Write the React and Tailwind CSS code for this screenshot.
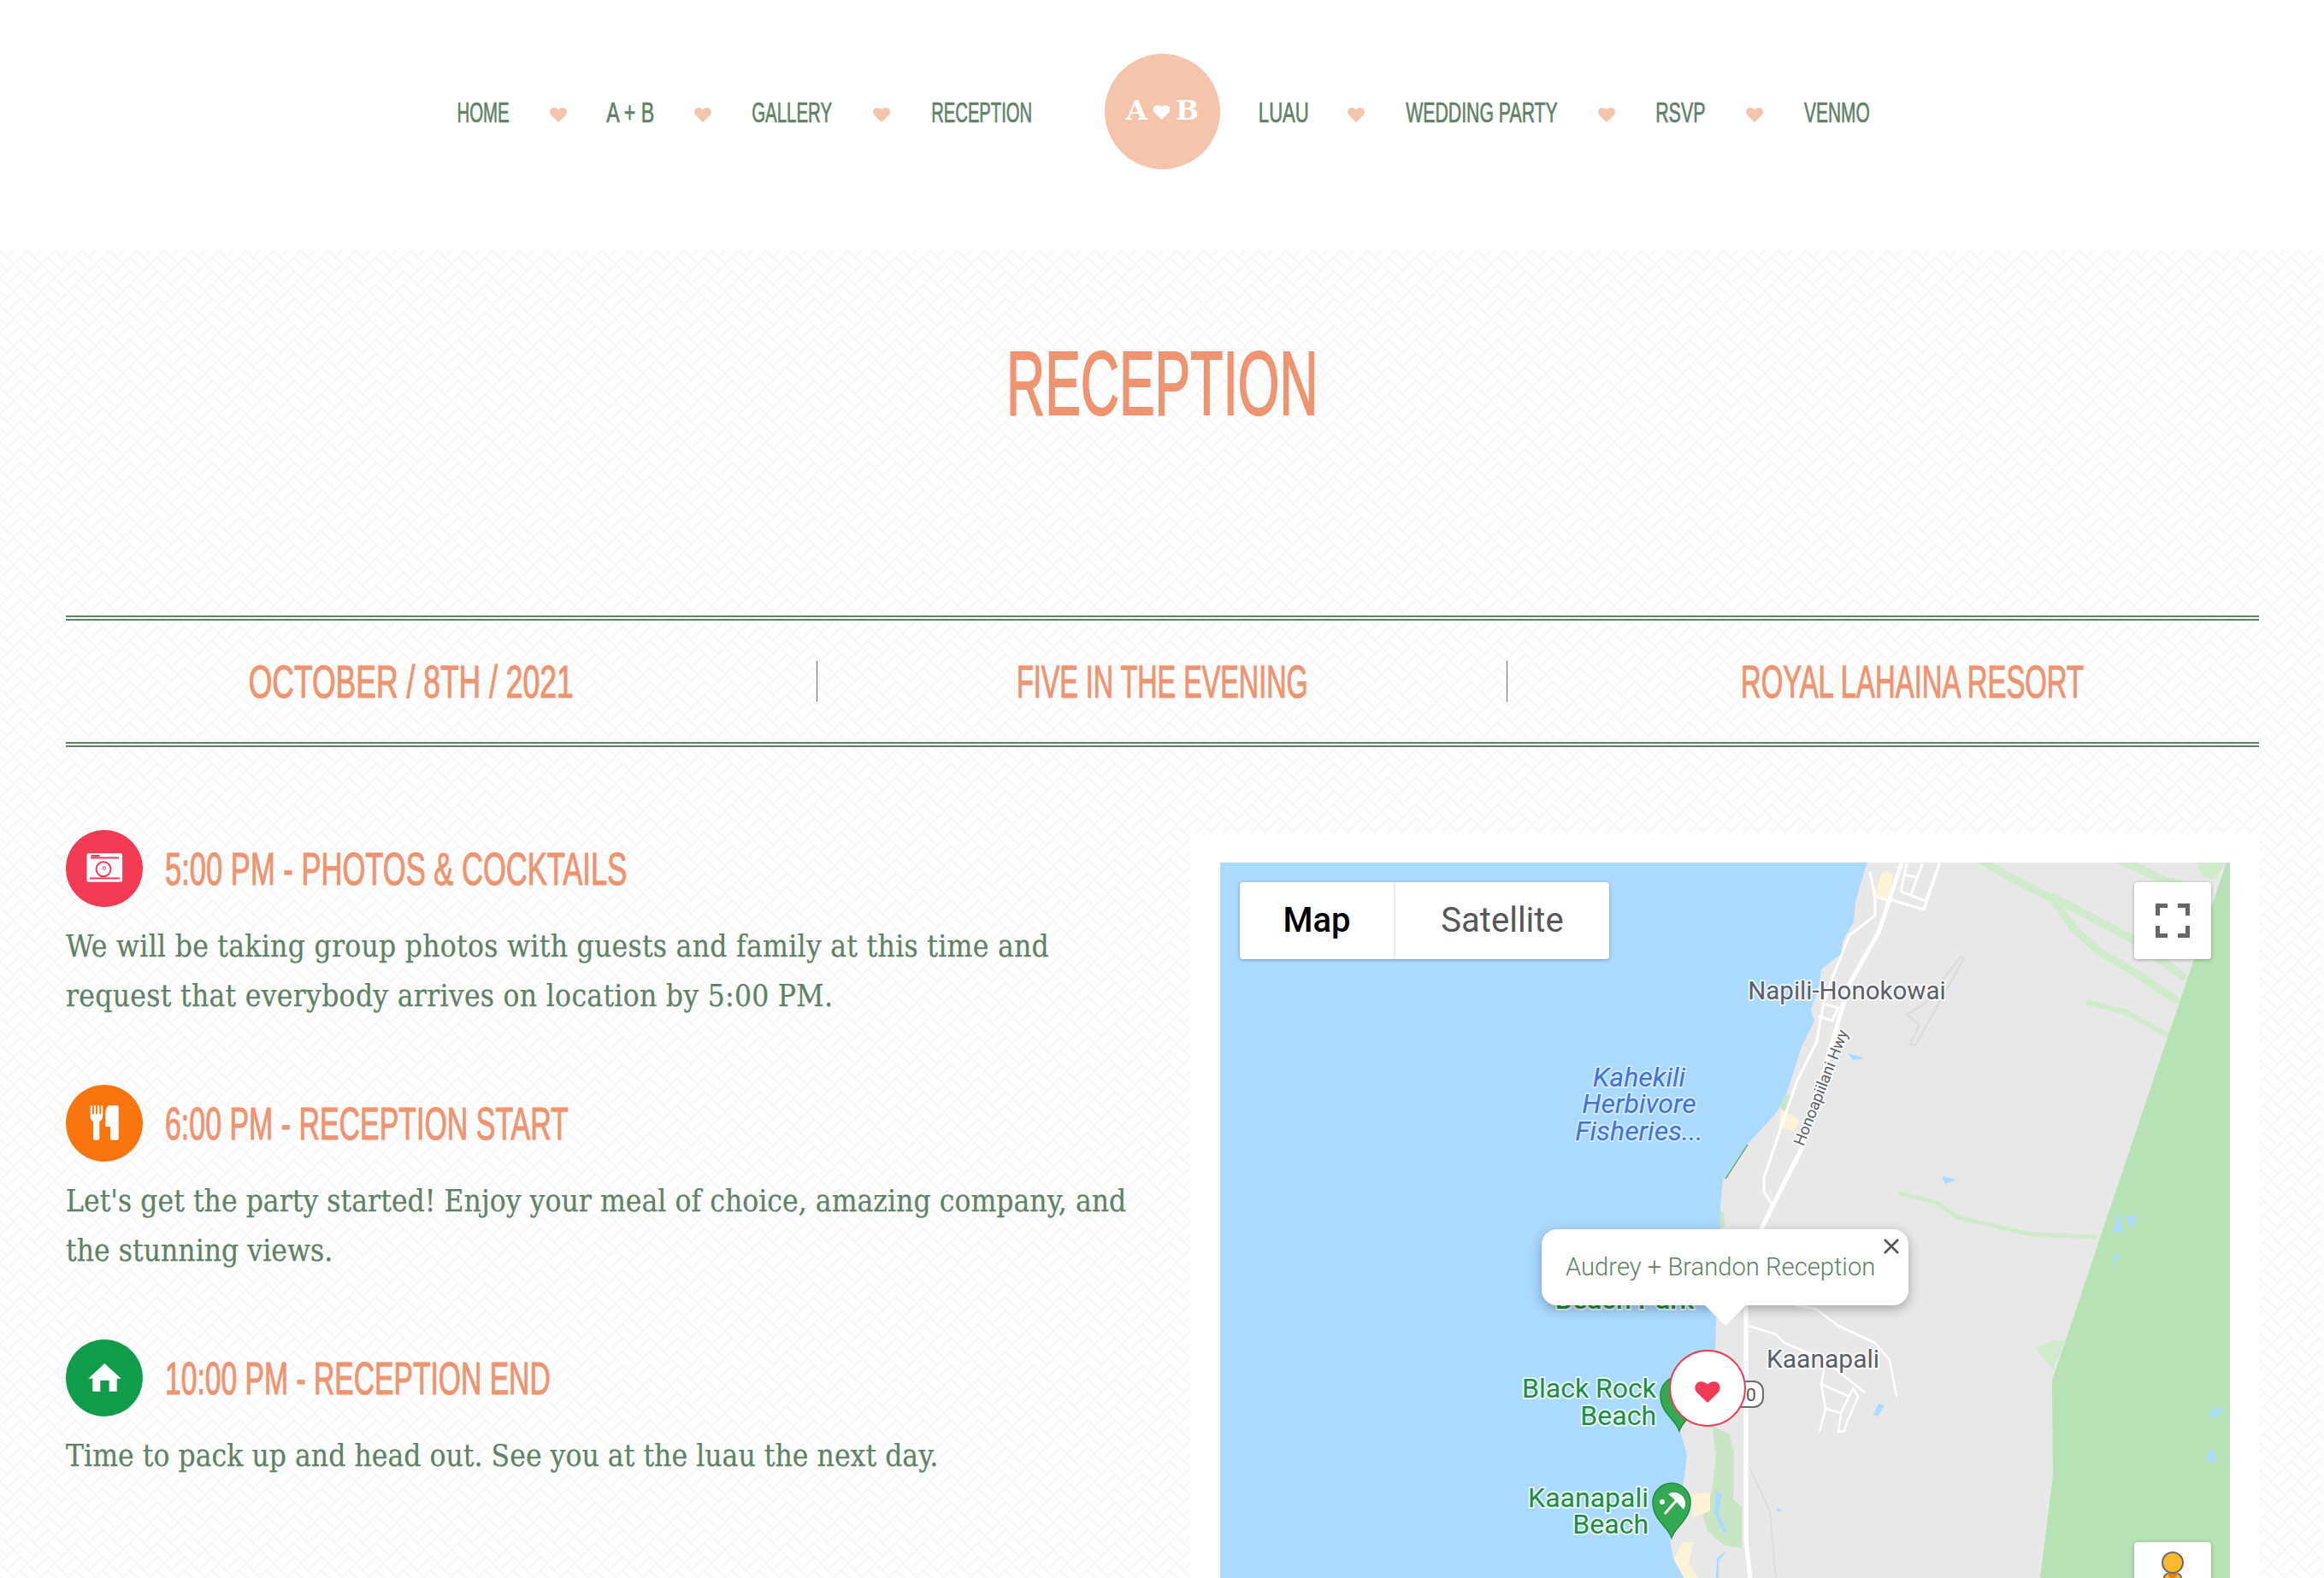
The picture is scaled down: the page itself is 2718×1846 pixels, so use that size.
import React from "react";

const OSW = "font-['Liberation_Sans',sans-serif]";
const PATTERN =
  "bg-[url(data:image/svg+xml,%3Csvg%20xmlns=%27http://www.w3.org/2000/svg%27%20width=%2732%27%20height=%2732%27%3E%3Cpath%20d=%27M0%200L32%2032M32%200L0%2032M24%208L32%2016M0%2016L8%2024M24%2024L16%2032M16%200L8%208%27%20stroke=%27%23f8f8f8%27%20stroke-width=%272.5%27%20fill=%27none%27/%3E%3C/svg%3E)]";

function NavHeart() {
  return (
    <svg width="20" height="17" viewBox="0 0 20 17" className="mt-2 flex-none">
      <path d="M10 17L1.4 8.6C-.6 6.4-.2 2.6 2 1 4.4-.6 7.600 0 10 2.400 12.400 0 15.600-.6 18 1c2.200 1.600 2.600 5.400.6 7.600z" fill="#f4c4ac" />
    </svg>
  );
}

function NavLink({ w, s, children }) {
  return (
    <span className={`${w} flex-none flex justify-center`}>
      <span className={`${OSW} ${s} text-[34px] leading-none text-[#5f8266] [-webkit-text-stroke:0.7px_#5f8266] whitespace-nowrap`}>{children}</span>
    </span>
  );
}

const LEFT = [
  { t: "HOME", w: "w-[62px]", s: "scale-x-[0.6]" },
  { t: "A + B", w: "w-[55px]", s: "scale-x-[0.68]" },
  { t: "GALLERY", w: "w-[95px]", s: "scale-x-[0.6]" },
  { t: "RECEPTION", w: "w-[120px]", s: "scale-x-[0.595]" },
];
const RIGHT = [
  { t: "LUAU", w: "w-[55px]", s: "scale-x-[0.65]" },
  { t: "WEDDING PARTY", w: "w-[179px]", s: "scale-x-[0.625]" },
  { t: "RSVP", w: "w-[59px]", s: "scale-x-[0.63]" },
  { t: "VENMO", w: "w-[78px]", s: "scale-x-[0.615]" },
];

function Header() {
  const row = (items) =>
    items.map((it, i) => (
      <React.Fragment key={it.t}>
        {i > 0 && <NavHeart />}
        <NavLink w={it.w} s={it.s}>{it.t}</NavLink>
      </React.Fragment>
    ));
  return (
    <header className="h-[293px] bg-white flex justify-center items-start pt-[63px] pl-[3px]">
      <div className="flex items-center gap-[47px] h-[135px]">
        {row(LEFT)}
        <div className="ml-[37px] w-[135px] h-[135px] rounded-full bg-[#f4c4ac] flex-none flex items-center justify-center gap-[6px] pb-[3px] font-['DejaVu_Serif',serif] font-bold text-[32px] leading-none text-white">
          <span>A</span>
          <svg width="21" height="17" viewBox="0 0 20 17" className="mt-[4px]">
            <path d="M10 17L1.4 8.6C-.6 6.400-.2 2.600 2 1 4.400-.6 7.600 0 10 2.400 12.400 0 15.600-.6 18 1c2.200 1.600 2.600 5.400.6 7.600z" fill="#fff" />
          </svg>
          <span>B</span>
        </div>
        {row(RIGHT)}
      </div>
    </header>
  );
}

function CameraIcon() {
  return (
    <svg width="90" height="90" viewBox="0 0 90 90">
      <rect x="24.500" y="27.300" width="41.600" height="33.400" rx="2" fill="#fff" />
      <rect x="29.500" y="29" width="10" height="2.200" fill="#f33a54" />
      <rect x="29" y="31.500" width="33" height="2" fill="#f33a54" />
      <circle cx="44" cy="45.700" r="8.500" fill="none" stroke="#f33a54" strokeWidth="2" />
      <circle cx="45" cy="44.500" r="1.700" fill="none" stroke="#f33a54" strokeWidth="1" />
      <rect x="28" y="55.500" width="35" height="2" fill="#f33a54" />
    </svg>
  );
}

function ForkIcon() {
  return (
    <svg width="90" height="90" viewBox="0 0 90 90" fill="#fff">
      <path d="M28.700 24.300h2.200v10h2v-10h2.200v10h2v-10h2.200v10h2v-10h1.900V36c0 4-1.900 6-3.900 7v20a1.700 1.700 0 0 1-1.700 1.700h-3.900A1.700 1.700 0 0 1 32 63V43c-2-1-3.300-3-3.300-7z" />
      <path d="M50 24.300h10a1.700 1.700 0 0 1 1.700 1.700v37a1.700 1.700 0 0 1-1.700 1.700h-6a2 2 0 0 1-2-2V49h-5.700V35c0-5 1-8 3.700-10.700z" />
    </svg>
  );
}

function HomeIcon() {
  return (
    <svg width="90" height="90" viewBox="0 0 90 90" fill="#fff">
      <path d="M45.300 28L64.700 45.700H59.700V60.700H50.700V48H40.300V60.700H31.300V45.700H26.300Z" />
    </svg>
  );
}

function Item({ color, icon, title, scale, tracking, children }) {
  return (
    <div>
      <div className="flex items-center gap-[26px] h-[90px]">
        <div className={`w-[90px] h-[90px] rounded-full flex-none ${color}`}>{icon}</div>
        <h3 className={`${OSW} ${scale} origin-left text-[53px] leading-none text-[#ee9470] [-webkit-text-stroke:1.1px_#ee9470] whitespace-nowrap`}>{title}</h3>
      </div>
      <p className={`mt-[17px] font-['DejaVu_Serif_Condensed','DejaVu_Serif',serif] text-[35px] ${tracking} leading-[58px] text-[#5f8266] [-webkit-text-stroke:0.25px_#5f8266] whitespace-nowrap`}>
        {children}
      </p>
    </div>
  );
}

function Label({ x, y, size = 30, fill = "#5b5f66", anchor = "middle", italic, weight = 400, children, transform, halo = "#fff" }) {
  return (
    <text
      x={x}
      y={y}
      fontSize={size}
      fill={fill}
      textAnchor={anchor}
      fontStyle={italic ? "italic" : "normal"}
      fontWeight={weight}
      fontFamily="Roboto, sans-serif"
      stroke={halo}
      strokeOpacity="0.75"
      strokeWidth="4"
      paintOrder="stroke"
      strokeLinejoin="round"
      transform={transform}
    >
      {children}
    </text>
  );
}

function Pin({ x, y, children }) {
  return (
    <g transform={`translate(${x} ${y})`}>
      <path d="M0 0C-4-14-22-20-22-42a22 22 0 0 1 44 0C22-20 4-14 0 0z" fill="#34a853" stroke="#1e8e3e" strokeWidth="1.500" />
      {children}
    </g>
  );
}

function MapDrawing() {
  const road = { fill: "none", stroke: "#fff", strokeLinejoin: "round", strokeLinecap: "round" };
  const hill = { fill: "none", stroke: "#cfebcb", strokeLinejoin: "round", strokeLinecap: "round" };
  return (
    <svg className="block" width="1181" height="838" viewBox="1427 1008 1181 838">
      <rect x="1427" y="1008" width="1181" height="838" fill="#aadaff" />
      <path
        d="M2185 1008L2183 1010 2170 1053 2168 1077 2155 1100 2153 1115 2130 1133 2128 1150 2118 1180 2122 1193 2107 1223 2090 1277 2080 1297 2063 1317 2043 1338 2015 1380 2012 1410 2012 1440 2007 1547 2006 1580 1985 1640 1963 1667 1973 1700 1970 1727 1953 1800 1957 1823 1970 1846H2608V1008Z"
        fill="#e8e8e8"
      />
      <path {...hill} strokeWidth="9" d="M2321 1008L2356 1028 2400 1050 2427 1087 2455 1112 2494 1135 2545 1169" />
      <path {...hill} strokeWidth="9" d="M2400 1048L2427 1062 2494 1098 2553 1141" />
      <path {...hill} strokeWidth="10" d="M2478 1004L2534 1030 2580 1040" />
      <path {...hill} strokeWidth="6" d="M2443 1172L2486 1183 2534 1209" />
      <path {...hill} strokeWidth="5" d="M2222 1395L2265 1406 2289 1423 2376 1443 2451 1446" />
      <path d="M2569 1008H2604L2590 1028 2577 1025ZM2380 1576L2400 1567 2415 1567 2401 1601Z" fill="#cfebcb" />
      <path d="M2002 1667L2023 1677 2028 1700 2027 1753 2037 1762 2037 1810 2017 1807 1997 1790 1992 1773 2003 1740 2007 1700ZM2011 1413L2016 1418 2017 1435 2012 1435Z" fill="#c8e6c4" />
      <path d="M2604 1008L2400 1614 2401 1725 2386 1846H2608V1008Z" fill="#b7e2b5" />
      <path d="M2161 1231L2181 1237 2167 1239ZM2271 1375L2288 1379 2275 1384ZM2472 1440L2477 1417 2484 1440ZM2484 1422L2498 1421 2495 1437ZM2472 1466H2478L2475 1480ZM2583 1652L2596 1644 2600 1651 2588 1658ZM2579 1702L2587 1694 2593 1706 2586 1711ZM2191 1654L2197 1641 2204 1643 2196 1656ZM2007 1743L2014 1746 2010 1770 2020 1790 2016 1793 2005 1770ZM2078 1762L2085 1767 2079 1767ZM2015 1816L2020 1813 2010 1825 2010 1846H2007L2008 1822Z" fill="#aadaff" />
      <path d="M2192 1047L2200 1022 2206 1018 2215 1022 2207 1052ZM2080 1318L2083 1298 2095 1303 2105 1310 2098 1322ZM1977 1747L2000 1745 2000 1767 1985 1772 1980 1775ZM1967 1803L1980 1803 1975 1827 1987 1846H1970L1958 1823Z" fill="#fdf3d8" />
      <path d="M2082 1295L2088 1279 2095 1281 2088 1299Z" fill="#c8e6c4" />
      <path d="M2018 1378L2044 1338" stroke="#5fb070" strokeWidth="1.500" />
      <path d="M2293 1118L2252 1172 2230 1186 2245 1198 2234 1220 2240 1222 2297 1120Z" fill="none" stroke="#dcdcdc" strokeWidth="2.500" />
      <path {...road} strokeWidth="5" d="M2224 1008L2197 1090 2163 1150 2152 1187 2107 1343 2073 1410 2060 1437 2043 1500 2042 1527V1800L2047 1846" />
      <path {...road} strokeWidth="3" d="M2187 1020L2193 1048V1070L2163 1093 2143 1143 2133 1173 2128 1197 2125 1217 2102 1263 2090 1297 2063 1377V1393L2072 1407" />
      <path {...road} strokeWidth="3" d="M2230 1010L2223 1042 2252 1053 2268 1010M2213 1052L2250 1063 2268 1010M2227 1022L2240 1025M2248 1010L2235 1045M2133 1173L2150 1178 2143 1193 2128 1188M2193 1048L2207 1052" />
      <path {...road} strokeWidth="2.500" d="M2045 1550L2077 1560 2087 1570 2133 1590 2180 1627M2100 1526L2123 1530 2150 1550 2193 1570 2210 1590 2218 1632M2133 1603L2130 1618 2135 1647 2128 1673M2130 1618L2163 1633M2135 1647L2153 1652M2167 1623L2173 1633 2160 1663 2157 1673 2150 1674 2153 1652 2167 1623" />
      <path d="M2047 1717L2070 1767 2077 1846" fill="none" stroke="#d8dadd" strokeWidth="1.500" />
      <Label x="2160" y="1168" size="29.500">Napili-Honokowai</Label>
      <Label x="2129" y="1278" size="18.500" transform="rotate(-68.600 2129 1271)">Honoapiilani Hwy</Label>
      <Label x="2132" y="1599" size="30">Kaanapali</Label>
      <Label x="1917" y="1270" size="32" fill="#4174d8" italic halo="#dff0ff">Kahekili</Label>
      <Label x="1917" y="1301" size="32" fill="#4174d8" italic halo="#dff0ff">Herbivore</Label>
      <Label x="1917" y="1333" size="32" fill="#4174d8" italic halo="#dff0ff">Fisheries...</Label>
      <Label x="1900" y="1530" size="32" fill="#1e8e3e" weight={500}>Beach Park</Label>
      <Label x="1937" y="1634" size="32" fill="#1e8e3e" anchor="end">Black Rock</Label>
      <Label x="1937" y="1666" size="32" fill="#1e8e3e" anchor="end">Beach</Label>
      <Label x="1928" y="1762" size="32" fill="#1e8e3e" anchor="end">Kaanapali</Label>
      <Label x="1928" y="1793" size="32" fill="#1e8e3e" anchor="end">Beach</Label>
      <rect x="2026" y="1615" width="36" height="30" rx="11" fill="#fff" stroke="#6b6b6b" strokeWidth="2" />
      <text x="2042" y="1638" fontSize="21" fontFamily="Roboto, sans-serif" fill="#555" textAnchor="middle">30</text>
      <Pin x={1964} y={1673} />
      <Pin x={1955} y={1798}>
        <circle cx="-11" cy="-42" r="3" fill="#fff" />
        <path d="M-4-51A13 13 0 0 1 14-33C10-37 4-45-4-51z" fill="#fff" />
        <path d="M5-43L-8-28" stroke="#fff" strokeWidth="3" />
      </Pin>
    </svg>
  );
}

function MapCard() {
  return (
    <div className="w-[1250px] flex-none mt-[4px] bg-white p-[35px] pt-[34px]">
      <div className="relative w-[1181px] h-[900px] overflow-hidden bg-[#e8e8e8]">
        <MapDrawing />
        <div className="absolute left-[23px] top-[23px] w-[432px] h-[90px] flex bg-white rounded-[4px] shadow-[0_1px_4px_rgba(0,0,0,0.3)] font-['Roboto',sans-serif] text-[40px] leading-none">
          <div className="w-[182px] flex items-center justify-center font-medium text-black border-r-2 border-[#ebebeb]">Map</div>
          <div className="flex-1 flex items-center justify-center text-[#565656]">Satellite</div>
        </div>
        <div className="absolute left-[1069px] top-[23px] w-[90px] h-[90px] bg-white rounded-[4px] shadow-[0_1px_4px_rgba(0,0,0,0.3)] flex items-center justify-center">
          <svg width="40" height="40" viewBox="0 0 40 40" fill="none" stroke="#666" strokeWidth="5">
            <path d="M2.500 14V2.500H14M26 2.500H37.500V14M37.500 26V37.500H26M14 37.500H2.500V26" />
          </svg>
        </div>
        <div className="absolute left-[1069px] top-[795px] w-[90px] h-[90px] bg-white rounded-[4px] shadow-[0_1px_4px_rgba(0,0,0,0.3)] flex justify-center">
          <svg width="40" height="60" viewBox="0 0 40 60" className="mt-[11px]">
            <path d="M6 60L10 30c1-4 5-5 10-5s9 1 10 5L34 60z" fill="#fdb92c" stroke="#6b6b6b" strokeWidth="2" />
            <path d="M13.500 25h13L20 37z" fill="#e67e22" />
            <circle cx="20" cy="13" r="12" fill="#fdb92c" stroke="#6b6b6b" strokeWidth="2" />
          </svg>
        </div>
        <div className="absolute left-[376px] top-[429px] w-[429px] h-[89px] bg-white rounded-[18px] shadow-[0_4px_14px_rgba(0,0,0,0.3)] pl-[28px] pt-[26px] font-['Roboto',sans-serif] font-light text-[29.2px] leading-[36px] text-[#5f8266] whitespace-nowrap">
          Audrey + Brandon Reception
          <svg width="20" height="20" viewBox="0 0 20 20" className="absolute right-[10px] top-[10px]" stroke="#555" strokeWidth="2.500">
            <path d="M2 2L18 18M18 2L2 18" />
          </svg>
          <svg width="48" height="25" viewBox="0 0 48 25" className="absolute left-[191px] top-[89px]">
            <path d="M0 0H48L24 24Z" fill="#fff" />
          </svg>
        </div>
        <div className="absolute left-[525px] top-[570px] w-[90px] h-[90px] rounded-full bg-white border-2 border-[#ef3b4f] flex items-center justify-center pt-[9px]">
          <svg width="30" height="25" viewBox="0 0 20 17">
            <path d="M10 17L1.400 8.600C-.6 6.400-.2 2.600 2 1 4.400-.6 7.600 0 10 2.400 12.400 0 15.600-.6 18 1c2.200 1.600 2.600 5.400.6 7.600z" fill="#f33a54" />
          </svg>
        </div>
      </div>
    </div>
  );
}

export default function App() {
  return (
    <div className="h-[1846px] w-full overflow-hidden bg-white">
      <Header />
      <main className={`bg-[#fefefe] ${PATTERN} pl-[77px] pr-[76px] pb-[200px]`}>
        <h1 className={`${OSW} text-[105px] leading-none text-center text-[#ee9470] [-webkit-text-stroke:2px_#ee9470] pt-[103px] h-[427px]`}>
          <span className="inline-block scale-x-[0.595]">RECEPTION</span>
        </h1>
        <div className={`${OSW} border-y-[6px] border-double border-[#5f8266] h-[154px] grid grid-cols-[878px_808px_1fr] items-center text-center text-[53px] leading-none text-[#ee9470] [-webkit-text-stroke:1.1px_#ee9470] whitespace-nowrap`}>
          <div className="pr-[70px]"><span className="inline-block scale-x-[0.67]">OCTOBER / 8TH / 2021</span></div>
          <div className="border-x border-[#6b6b6b] h-[48px] flex items-center justify-center"><span className="inline-block scale-x-[0.61]">FIVE IN THE EVENING</span></div>
          <div className="pl-[67px]"><span className="inline-block scale-x-[0.62]">ROYAL LAHAINA RESORT</span></div>
        </div>
        <div className="flex justify-between mt-[97px]">
          <div className="flex flex-col gap-[75px]">
            <Item color="bg-[#f33a54]" icon={<CameraIcon />} scale="scale-x-[0.652]" tracking="tracking-[0.3px]" title="5:00 PM - PHOTOS & COCKTAILS">
              We will be taking group photos with guests and family at this time and
              <br />
              request that everybody arrives on location by 5:00 PM.
            </Item>
            <Item color="bg-[#f97510]" icon={<ForkIcon />} scale="scale-x-[0.64]" tracking="tracking-[0.05px]" title="6:00 PM - RECEPTION START">
              Let's get the party started! Enjoy your meal of choice, amazing company, and
              <br />
              the stunning views.
            </Item>
            <Item color="bg-[#109c4b]" icon={<HomeIcon />} scale="scale-x-[0.635]" tracking="tracking-[0.05px]" title="10:00 PM - RECEPTION END">
              Time to pack up and head out. See you at the luau the next day.
            </Item>
          </div>
          <MapCard />
        </div>
      </main>
    </div>
  );
}
